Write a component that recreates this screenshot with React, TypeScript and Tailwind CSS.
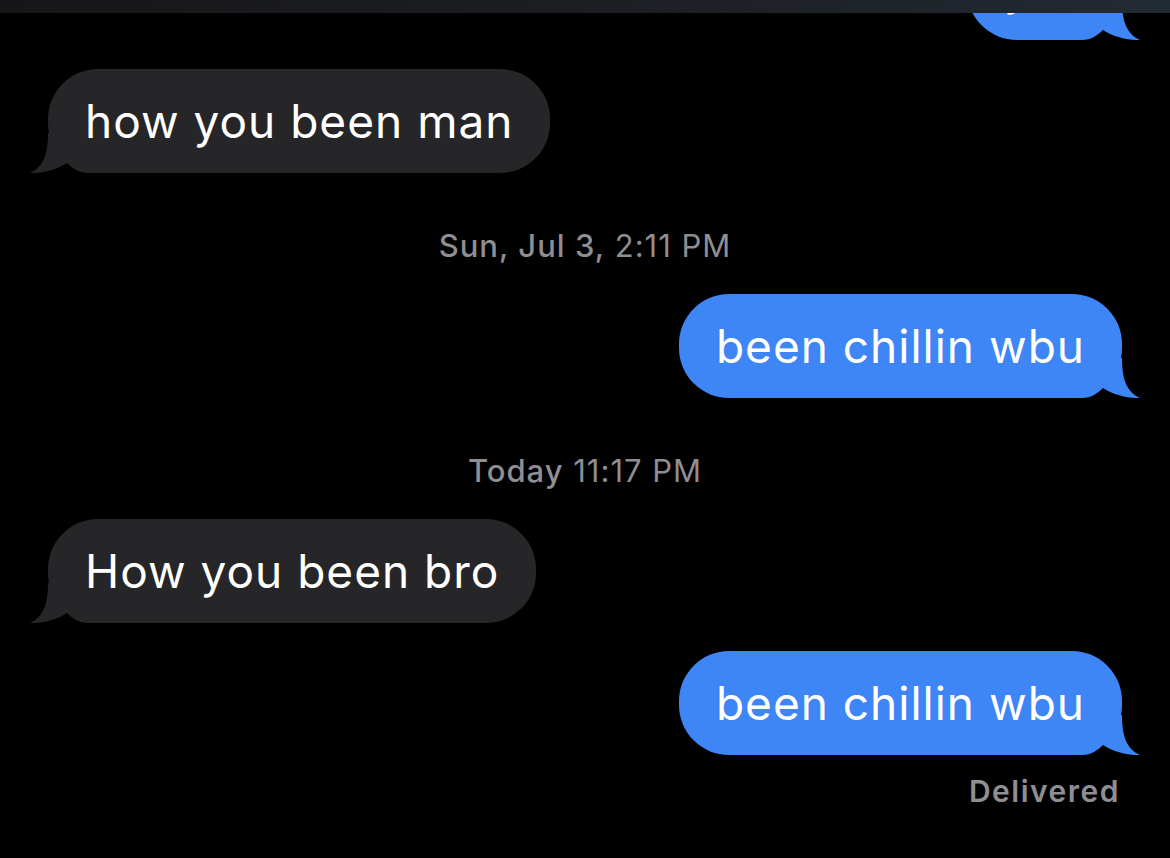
import React from "react";

const BLUE = "#3e85f6";
const GRAY = "#262629";

function Tail({ side, color }: { side: "left" | "right"; color: string }) {
  const cls =
    side === "right"
      ? "absolute bottom-0 right-[-18px] w-[78px] h-[40px]"
      : "absolute bottom-0 left-[-18px] w-[78px] h-[40px] -scale-x-100";
  return (
    <svg className={cls} viewBox="0 0 78 40" aria-hidden>
      <path
        d="M0 0 H60 C60 22 65 34 78 40 C70 40.5 52 38 41 30 C36 35 29 40 20 40 H0 Z"
        fill={color}
      />
    </svg>
  );
}

function Bubble({ text, me }: { text: string; me?: boolean }) {
  const color = me ? BLUE : GRAY;
  return (
    <div className={me ? "flex justify-end" : "flex justify-start"}>
      <div
        className={
          "relative h-[104px] rounded-[50px] px-[37px] flex items-center text-white text-[46px] leading-none tracking-[1px] " +
          (me ? "bg-[#3e85f6]" : "bg-[#262629]")
        }
      >
        <Tail side={me ? "right" : "left"} color={color} />
        <span className="relative">{text}</span>
      </div>
    </div>
  );
}

function Stamp({ bold, rest }: { bold: string; rest: string }) {
  return (
    <div className="text-center text-[31px] leading-[34px] tracking-[1px] text-[#8e8e93]">
      <span className="font-medium">{bold}</span> {rest}
    </div>
  );
}

export default function App() {
  return (
    <div
      className="relative w-[1170px] h-[858px] overflow-hidden bg-black"
      style={{ fontFamily: "Inter, 'Noto Sans', sans-serif" }}
    >
      <div className="absolute top-0 left-0 right-0 h-[13px] bg-gradient-to-r from-[#161618] via-[#1c1e22] to-[#222a33] z-10" />
      <div className="flex flex-col pl-[48px] pr-[48px]">
        <div className="mt-[-64px]">
          <Bubble text="yea" me />
        </div>
        <div className="mt-[29px]">
          <Bubble text="how you been man" />
        </div>
        <div className="mt-[56px]">
          <Stamp bold="Sun, Jul 3," rest="2:11 PM" />
        </div>
        <div className="mt-[31px]">
          <Bubble text="been chillin wbu" me />
        </div>
        <div className="mt-[56px]">
          <Stamp bold="Today" rest="11:17 PM" />
        </div>
        <div className="mt-[31px]">
          <Bubble text="How you been bro" />
        </div>
        <div className="mt-[28px]">
          <Bubble text="been chillin wbu" me />
        </div>
        <div className="mt-[19px] flex justify-end pr-[2px]">
          <span className="text-[30px] leading-[34px] font-semibold tracking-[1.5px] text-[#8e8e93]">
            Delivered
          </span>
        </div>
      </div>
    </div>
  );
}
